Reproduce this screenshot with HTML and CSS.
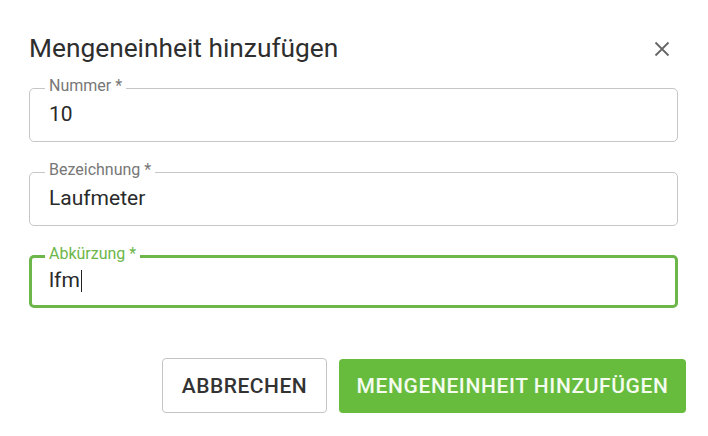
FILE: index.html
```html
<!DOCTYPE html>
<html lang="de">
<head>
<meta charset="utf-8">
<title>Mengeneinheit hinzufügen</title>
<link rel="stylesheet" href="styles.css">
</head>
<body>
<div class="dialog">
  <header class="dialog-head">
    <h1 class="dialog-title">Mengeneinheit hinzufügen</h1>
    <button class="close" aria-label="Schließen">
      <svg width="16" height="16" viewBox="0 0 16 16"><path d="M1.5 1.5 L14.5 14.5 M14.5 1.5 L1.5 14.5" stroke="#666" stroke-width="1.8" fill="none"/></svg>
    </button>
  </header>
  <div class="fields">
    <fieldset class="field">
      <legend class="field-label">Nummer *</legend>
      <div class="field-value">10</div>
    </fieldset>
    <fieldset class="field">
      <legend class="field-label">Bezeichnung *</legend>
      <div class="field-value">Laufmeter</div>
    </fieldset>
    <fieldset class="field field-focused">
      <legend class="field-label">Abkürzung *</legend>
      <div class="field-value">lfm<span class="caret"></span></div>
    </fieldset>
  </div>
  <div class="actions">
    <button class="btn btn-outline">Abbrechen</button>
    <button class="btn btn-primary">Mengeneinheit hinzufügen</button>
  </div>
</div>
</body>
</html>
```
FILE: styles.css
```css
* { box-sizing: border-box; }
html, body { margin: 0; background: #fff; }
body { font-family: Roboto, "Noto Sans", "Liberation Sans", sans-serif; color: #2f2f2f; }

.dialog { width: 708px; height: 436px; }

.dialog-head {
  display: flex;
  align-items: center;
  justify-content: space-between;
  padding: 31px 38px 0 29px;
}
.dialog-title {
  margin: 0;
  font-size: 26.3px;
  line-height: 34px;
  font-weight: 400;
  color: #2e2e2e;
}
.close {
  border: 0;
  background: none;
  padding: 0;
  width: 16px;
  height: 16px;
  display: flex;
  margin-top: 1px;
}

.fields {
  display: flex;
  flex-direction: column;
  gap: 19px;
  padding: 12px 30px 0 29px;
}
.field {
  margin: 0;
  padding: 3px 19px 14px;
  border: 1px solid #c6c6c6;
  border-radius: 5px;
  min-width: 0;
}
.field-label {
  margin-left: -4px;
  padding: 0 4px 4px;
  font-size: 16px;
  line-height: 18px;
  color: #777;
}
.field-value {
  font-size: 21px;
  line-height: 25px;
  color: #2a2a2a;
  display: flex;
  align-items: center;
}
.field-focused {
  border: 3px solid #6db64a;
  padding: 1px 17px 12px;
}
.field-focused .field-label {
  color: #6db64a;
}
.caret {
  display: inline-block;
  width: 1px;
  height: 22px;
  background: #222;
  margin-left: 1px;
}

.actions {
  display: flex;
  justify-content: flex-end;
  gap: 12px;
  padding: 50px 22px 0 0;
}
.btn {
  font-family: Roboto, "Noto Sans", "Liberation Sans", sans-serif;
  font-size: 21px;
  font-weight: 500;
  text-transform: uppercase;
  height: 55px;
  border-radius: 4px;
  padding: 0;
}
.btn-outline {
  background: #fff;
  border: 1px solid #c4c4c4;
  color: #333;
  width: 165px;
  letter-spacing: 0.5px;
}
.btn-primary {
  background: #67bc3e;
  border: 0;
  color: #f4fbef;
  width: 347px;
  height: 54px;
  margin-top: 1px;
  letter-spacing: 0.6px;
}
```
